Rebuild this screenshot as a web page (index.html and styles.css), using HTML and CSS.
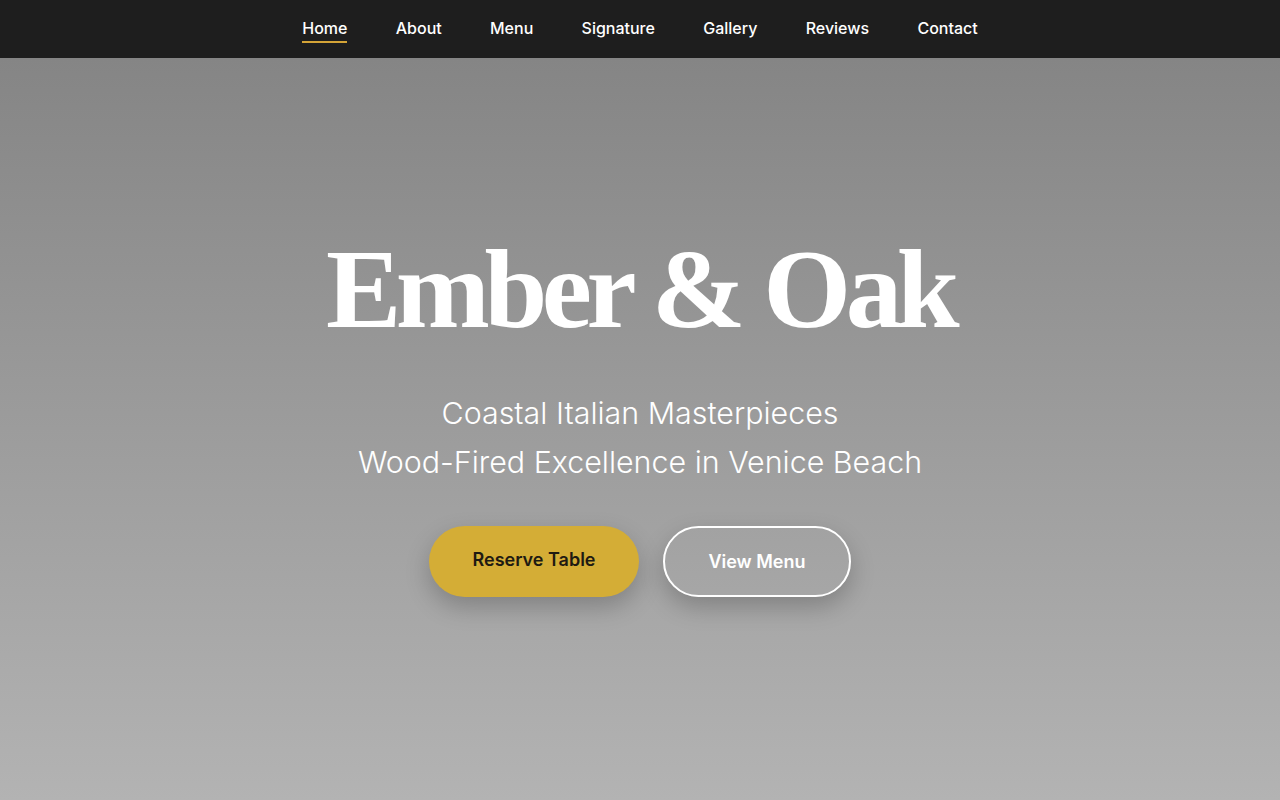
FILE: index.html
```html
<!DOCTYPE html>
<html lang="en">
<head>
<meta charset="utf-8">
<title>Ember &amp; Oak</title>
<link rel="stylesheet" href="styles.css">
</head>
<body>
<nav class="nav">
  <ul class="nav-list">
    <li><a class="nav-link active" href="#">Home</a></li>
    <li><a class="nav-link" href="#">About</a></li>
    <li><a class="nav-link" href="#">Menu</a></li>
    <li><a class="nav-link" href="#">Signature</a></li>
    <li><a class="nav-link" href="#">Gallery</a></li>
    <li><a class="nav-link" href="#">Reviews</a></li>
    <li><a class="nav-link" href="#">Contact</a></li>
  </ul>
</nav>
<section class="hero">
  <div class="hero-content">
    <h1 class="hero-title">Ember &amp; Oak</h1>
    <p class="hero-sub">Coastal Italian Masterpieces<br>Wood-Fired Excellence in Venice Beach</p>
    <div class="hero-actions">
      <a class="btn btn-primary" href="#">Reserve Table</a>
      <a class="btn btn-outline" href="#">View Menu</a>
    </div>
  </div>
</section>
</body>
</html>
```
FILE: styles.css
```css
* { box-sizing: border-box; }
html, body { margin: 0; padding: 0; }
body {
  font-family: Inter, "Noto Sans", sans-serif;
  color: #fff;
  background: #b3b3b3;
  height: 800px;
  overflow: hidden;
}
.nav {
  height: 58px;
  background: #1e1e1e;
  display: flex;
  align-items: center;
  justify-content: center;
}
.nav-list {
  list-style: none;
  margin: 0;
  padding: 0 0 2px 0;
  display: flex;
  gap: 48.3px;
}
.nav-link {
  position: relative;
  color: #fff;
  text-decoration: none;
  font-size: 16px;
  font-weight: 500;
  display: block;
  line-height: 20px;
}
.nav-link.active::after {
  content: "";
  position: absolute;
  left: 0;
  right: 0;
  bottom: -5px;
  height: 2px;
  background: #d4a437;
}
.hero {
  height: 742px;
  background: linear-gradient(180deg, #858585 0%, #b3b3b3 100%);
  display: flex;
  align-items: center;
  justify-content: center;
  text-align: center;
}
.hero-content {
  display: flex;
  flex-direction: column;
  align-items: center;
  margin-top: -30px;
}
.hero-title {
  margin: 0;
  font-family: "Liberation Serif", "Times New Roman", serif;
  font-weight: 700;
  font-size: 113px;
  line-height: 1;
  letter-spacing: -5.5px;
}
.hero-sub {
  margin: 44px 0 0 0;
  font-size: 30.4px;
  font-weight: 300;
  line-height: 49px;
}
.hero-actions {
  margin-top: 39px;
  display: flex;
  gap: 24px;
}
.btn {
  display: flex;
  align-items: center;
  justify-content: center;
  height: 71px;
  border-radius: 36px;
  font-size: 18px;
  font-weight: 600;
  text-decoration: none;
  box-shadow: 0 10px 24px rgba(0,0,0,0.22);
}
.btn-primary {
  width: 210px;
  background: #d4ad36;
  color: #1e1a12;
  padding-bottom: 4px;
}
.btn-outline {
  width: 188px;
  border: 2px solid #fff;
  color: #fff;
  background: transparent;
}
```
